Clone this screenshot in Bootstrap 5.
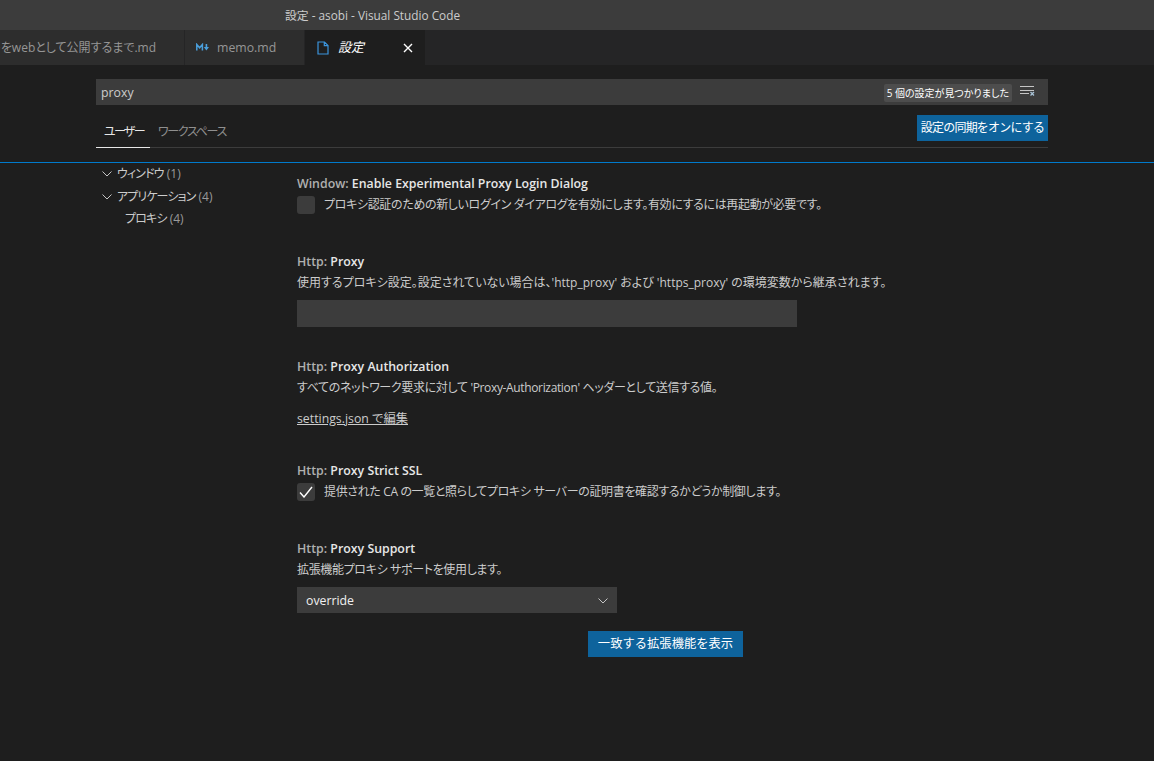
<!DOCTYPE html>
<html lang="ja">
<head>
<meta charset="UTF-8">
<title>設定 - asobi - Visual Studio Code</title>
<link href="https://cdn.jsdelivr.net/npm/bootstrap@5.3.0/dist/css/bootstrap.min.css" rel="stylesheet">
<style>
    html, body { height: 100%; }
    body {
        background: #1e1e1e;
        color: #ccc;
        font-family: "Open Sans", "Noto Sans CJK JP", sans-serif;
        font-size: 12.3px;
        line-height: 20px;
        overflow: hidden;
        font-feature-settings: "palt";
    }
    .title-bar { height: 30px; background: #3c3c3c; color: #ccc; font-size: 11.8px; line-height: 30px; padding-left: 285px; }
    .tab-strip { height: 35px; background: #252526; overflow: hidden; }
    .ed-tab { height: 35px; background: #2d2d2d; color: #969696; border-right: 1px solid #252526; line-height: 35px; white-space: nowrap; }
    .ed-tab-first { width: 185px; justify-content: flex-end; padding-right: 28px; font-size: 12px; }
    .ed-tab-memo { width: 120px; padding-left: 11px; gap: 7px; }
    .ed-tab-active { width: 120px; background: #1e1e1e; color: #fff; padding-left: 12px; border-right: 0; }
    .ed-tab-active em { margin-left: 9px; flex-grow: 1; font-size: 13px; }
    .ed-close { margin-right: 12px; }
    .head-wrap { padding: 14px 106px 0 96px; height: 98px; border-bottom: 1px solid #007acc; }
    .search-box { height: 26px; background: #3c3c3c; padding: 1px 13px 0 5px; }
    .count-pill { background: #4d4d4d; color: #fff; font-size: 10px; line-height: 18px; padding: 0 3px; border-radius: 2px; margin-right: 8px; }
    .clear-icon { margin-bottom: 3px; }
    .scope-row { margin-top: 10px; height: 33px; border-bottom: 1px solid #3c3c3c; }
    .scope-tab { padding: 0 8px; height: 33px; line-height: 33px; font-size: 12px; color: #8f8f8f; letter-spacing: -1.3px; white-space: nowrap; }
    .scope-tab.on { color: #e7e7e7; border-bottom: 1px solid #e7e7e7; letter-spacing: -1.7px; width: 54px; }
    .vs-btn { background: #0e639c; color: #fff; border: 0; border-radius: 0; font-size: 12.3px; line-height: 26px; height: 26px; padding: 0; white-space: nowrap; }
    .sync-btn { width: 131px; font-size: 12px; letter-spacing: -0.8px; }
    .side-tree { width: 201px; padding-left: 6px; margin-left: 96px; font-size: 12px; letter-spacing: -0.9px; }
    .tree-row { height: 22px; line-height: 22px; margin-bottom: 0.5px; color: #ccc; gap: 5px; }
    .tree-row span { color: #9a9a9a; letter-spacing: 0; margin-left: 1px; }
    .tree-sub { padding-left: 23px; }
    .set-col { width: 760px; padding-top: 11px; }
    .set-item { margin-bottom: 30px; }
    .set-item-check { margin-bottom: 36px; }
    .set-item-link { margin-bottom: 32px; }
    .set-title { font-weight: 600; font-size: 12.35px; line-height: 20px; color: #e7e7e7; }
    .set-title span { color: #b0b0b0; }
    .set-desc { font-size: 12px; line-height: 22px; color: #ccc; white-space: nowrap; letter-spacing: -0.35px; }
    .set-desc-plain { letter-spacing: 0; }
    .fake-check { width: 18px; height: 18px; background: #3c3c3c; border-radius: 3px; margin-right: 9px; flex-shrink: 0; }
    .text-field { width: 500px; height: 27px; background: #3c3c3c; margin-top: 6px; }
    .edit-link { color: #ccc; text-decoration: underline; font-size: 12.3px; display: block; margin-top: 10px; }
    .drop-field { width: 320px; height: 26px; background: #3c3c3c; color: #f0f0f0; margin-top: 6px; padding: 1px 9px 0 9px; font-size: 12.3px; }
    .ext-btn { width: 155px; margin: 18px 0 0 291px; display: block; }
</style>
</head>
<body>

<div class="title-bar">設定 - asobi - Visual Studio Code</div>

<div class="tab-strip d-flex">
    <div class="ed-tab ed-tab-first d-flex">トをwebとして公開するまで.md</div>
    <div class="ed-tab ed-tab-memo d-flex align-items-center">
        <svg width="14" height="9" viewBox="0 0 14 9" fill="none"><path d="M.8 7.5V1.5L3.6 4.8 6.4 1.5V7.5" stroke="#4a9fdc" stroke-width="1.5"/><path d="M9.6 1h1.6v3H13L10.4 7.5 7.8 4h1.8z" fill="#4a9fdc"/></svg>
        <span>memo.md</span>
    </div>
    <div class="ed-tab ed-tab-active d-flex align-items-center">
        <svg width="12" height="14" viewBox="0 0 12 14" fill="none" stroke="#3b94dc" stroke-width="1.2"><path d="M1 1h6.5L11 4.5V13H1zM7.3 1v3.7H11"/></svg>
        <em>設定</em>
        <svg class="ed-close" width="10" height="10" viewBox="0 0 10 10" stroke="#fff" stroke-width="1.4"><path d="M1 1l8 8M9 1L1 9"/></svg>
    </div>
</div>

<div class="head-wrap">
    <div class="search-box d-flex align-items-center">
        <span class="flex-grow-1">proxy</span>
        <span class="count-pill">5 個の設定が見つかりました</span>
        <svg class="clear-icon" width="15" height="10" viewBox="0 0 15 10" fill="none" stroke="#c5c5c5"><path d="M0 .5h14M0 4.5h14M0 7.5h9"/><path d="M10.5 6l3.5 3.5M14 6l-3.5 3.5" stroke="#a9c4d8" stroke-width="1.3"/></svg>
    </div>
    <div class="d-flex justify-content-between align-items-start scope-row">
        <div class="d-flex">
            <div class="scope-tab on">ユーザー</div>
            <div class="scope-tab">ワークスペース</div>
        </div>
        <button class="btn vs-btn sync-btn" type="button">設定の同期をオンにする</button>
    </div>
</div>

<div class="d-flex">
    <div class="side-tree">
        <div class="tree-row d-flex align-items-center">
            <svg width="10" height="6" viewBox="0 0 10 6" fill="none" stroke="#c5c5c5"><path d="M.5.5L5 5 9.5.5"/></svg>
            <div>ウィンドウ <span>(1)</span></div>
        </div>
        <div class="tree-row d-flex align-items-center">
            <svg width="10" height="6" viewBox="0 0 10 6" fill="none" stroke="#c5c5c5"><path d="M.5.5L5 5 9.5.5"/></svg>
            <div>アプリケーション <span>(4)</span></div>
        </div>
        <div class="tree-row tree-sub">プロキシ <span>(4)</span></div>
    </div>
    <div class="set-col">
        <div class="set-item set-item-check">
            <div class="set-title"><span>Window:</span> Enable Experimental Proxy Login Dialog</div>
            <div class="set-desc d-flex align-items-center"><div class="fake-check"></div>プロキシ認証のための新しいログイン ダイアログを有効にします。有効にするには再起動が必要です。</div>
        </div>
        <div class="set-item">
            <div class="set-title"><span>Http:</span> Proxy</div>
            <div class="set-desc set-desc-plain">使用するプロキシ設定。設定されていない場合は、'http_proxy' および 'https_proxy' の環境変数から継承されます。</div>
            <div class="text-field"></div>
        </div>
        <div class="set-item set-item-link">
            <div class="set-title"><span>Http:</span> Proxy Authorization</div>
            <div class="set-desc">すべてのネットワーク要求に対して 'Proxy-Authorization' ヘッダーとして送信する値。</div>
            <a class="edit-link" href="#">settings.json で編集</a>
        </div>
        <div class="set-item set-item-check">
            <div class="set-title"><span>Http:</span> Proxy Strict SSL</div>
            <div class="set-desc d-flex align-items-center">
                <div class="fake-check d-flex align-items-center justify-content-center">
                    <svg width="14" height="12" viewBox="0 0 14 12" fill="none" stroke="#fff" stroke-width="1.4"><path d="M1 6.5L5 11 13 1"/></svg>
                </div>提供された CA の一覧と照らしてプロキシ サーバーの証明書を確認するかどうか制御します。</div>
        </div>
        <div>
            <div class="set-title"><span>Http:</span> Proxy Support</div>
            <div class="set-desc">拡張機能プロキシ サポートを使用します。</div>
            <div class="drop-field d-flex align-items-center justify-content-between">
                <span>override</span>
                <svg width="10" height="6" viewBox="0 0 10 6" fill="none" stroke="#c5c5c5"><path d="M.5.5L5 5 9.5.5"/></svg>
            </div>
            <button class="btn vs-btn ext-btn" type="button">一致する拡張機能を表示</button>
        </div>
    </div>
</div>

<script src="https://cdn.jsdelivr.net/npm/bootstrap@5.3.0/dist/js/bootstrap.bundle.min.js"></script>
</body>
</html>
